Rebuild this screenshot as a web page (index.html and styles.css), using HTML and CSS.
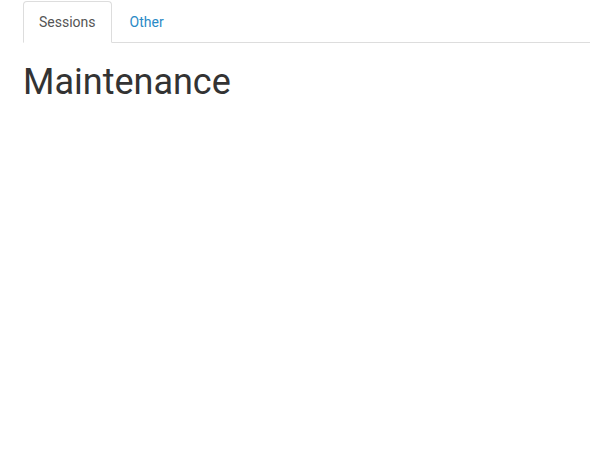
FILE: index.html
```html
<!DOCTYPE html>
<html>
<head>
<meta charset="utf-8">
<link rel="stylesheet" href="styles.css">
</head>
<body>
<div class="page">
  <ul class="tabs">
    <li class="tab active"><a href="#">Sessions</a></li>
    <li class="tab"><a href="#">Other</a></li>
  </ul>
  <h1 class="title">Maintenance</h1>
</div>
</body>
</html>
```
FILE: styles.css
```css
html, body {
  margin: 0;
  padding: 0;
  background: #fff;
}
body {
  font-family: Roboto, "Liberation Sans", sans-serif;
  font-size: 14px;
  line-height: 1.42857;
  color: #333;
}
.page {
  padding: 1px 0 0 23px;
}
.tabs {
  list-style: none;
  margin: 0;
  padding: 0;
  display: flex;
  border-bottom: 1px solid #ddd;
}
.tab {
  margin-bottom: -1px;
  margin-right: 2px;
}
.tab a {
  display: block;
  padding: 10px 15px;
  line-height: 20px;
  border: 1px solid transparent;
  border-radius: 4px 4px 0 0;
  text-decoration: none;
  color: #2a8ac6;
}
.tab.active a {
  color: #555;
  background: #fff;
  border-color: #ddd #ddd transparent;
}
.title {
  margin: 20px 0 10px;
  font-size: 36px;
  font-weight: 400;
  line-height: 1.1;
  color: #333;
}
```
